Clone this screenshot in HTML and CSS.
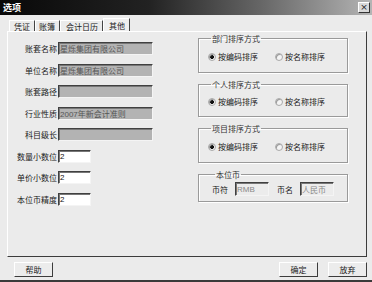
FILE: index.html
```html
<!DOCTYPE html>
<html lang="zh">
<head>
    <meta charset="UTF-8">
    <meta name="viewport" content="width=device-width, initial-scale=1.0">
    <title>选项</title>
    <link rel="stylesheet" href="styles.css">
</head>
<body>
    <div class="window">
        <div class="titlebar">
            <span class="title">选项</span>
            <span class="close">×</span>
        </div>

        <ul class="tabs">
            <li>凭证</li>
            <li>账簿</li>
            <li>会计日历</li>
            <li class="active">其他</li>
        </ul>

        <div class="panel">
            <div class="form">
                <label>账套名称</label><input class="wide disabled" value="星烁集团有限公司" disabled>
                <label>单位名称</label><input class="wide disabled" value="星烁集团有限公司" disabled>
                <label>账套路径</label><input class="wide disabled" value="" disabled>
                <label>行业性质</label><input class="wide disabled" value="2007年新会计准则" disabled>
                <label>科目级长</label><input class="wide disabled" value="" disabled>
                <label>数量小数位</label><input class="small" value="2">
                <label>单价小数位</label><input class="small" value="2">
                <label>本位币精度</label><input class="small" value="2">
            </div>

            <div class="groups">
                <fieldset class="group">
                    <legend>部门排序方式</legend>
                    <span class="radio checked"><i></i>按编码排序</span>
                    <span class="radio"><i></i>按名称排序</span>
                </fieldset>
                <fieldset class="group">
                    <legend>个人排序方式</legend>
                    <span class="radio checked"><i></i>按编码排序</span>
                    <span class="radio"><i></i>按名称排序</span>
                </fieldset>
                <fieldset class="group">
                    <legend>项目排序方式</legend>
                    <span class="radio checked"><i></i>按编码排序</span>
                    <span class="radio"><i></i>按名称排序</span>
                </fieldset>
                <fieldset class="group currency">
                    <legend>本位币</legend>
                    <span class="field">币符</span><input class="cur" value="RMB" disabled>
                    <span class="field">币名</span><input class="cur" value="人民币" disabled>
                </fieldset>
            </div>
        </div>

        <div class="footer">
            <button>帮助</button>
            <span class="spacer"></span>
            <button>确定</button>
            <button>放弃</button>
        </div>
    </div>
</body>
</html>
```

FILE: styles.css
```css
body {
    margin: 0;
    font-family: "Noto Sans CJK SC", "Liberation Sans", sans-serif;
    font-size: 8px;
    color: #222;
}

.window {
    width: 372px;
    height: 282px;
    box-sizing: border-box;
    background-color: #ebebeb;
    border-bottom: 2px solid #3a3a3a;
    display: flex;
    flex-direction: column;
}

/* Title bar */
.titlebar {
    height: 15px;
    display: flex;
    align-items: center;
    justify-content: space-between;
    padding: 0 2px 0 3px;
    background: linear-gradient(to right, #080808, #222 40%, #666 70%, #b4b4b4);
}

.title {
    color: #fff;
    font-weight: bold;
    font-size: 9px;
    line-height: 1;
}

.close {
    width: 10px;
    height: 9px;
    line-height: 8px;
    text-align: center;
    font-family: "DejaVu Sans", sans-serif;
    font-size: 9px;
    color: #222;
    background-color: #d8d8d8;
    border: 1px solid;
    border-color: #fff #333 #333 #fff;
}

/* Tabs */
.tabs {
    display: flex;
    align-items: flex-end;
    list-style-type: none;
    margin: 4px 0 0 9px;
    padding: 0;
    height: 12px;
}

.tabs li {
    height: 10px;
    line-height: 11px;
    padding: 0 4px 0 4px;
    border-left: 1px solid #fff;
    border-top: 1px solid #fff;
    border-right: 1px solid #444;
}

.tabs li:nth-child(2) {
    padding-left: 3px;
}

.tabs li:nth-child(3) {
    padding-left: 5px;
}

.tabs li.active {
    height: 12px;
    line-height: 14px;
    padding-left: 5px;
    background-color: #efefef;
}

/* Panel */
.panel {
    margin: 0 5px 0 7px;
    height: 226px;
    box-sizing: border-box;
    border: 1px solid;
    border-color: #fff #3c3c3c #3c3c3c #fff;
    display: flex;
}

.form {
    width: 190px;
    padding-top: 10px;
    display: grid;
    grid-template-columns: 50px auto;
    grid-auto-rows: 13px;
    row-gap: 8.5px;
    align-items: center;
    align-content: start;
}

.form label {
    text-align: right;
    padding-right: 1px;
    white-space: nowrap;
}

input {
    box-sizing: border-box;
    height: 13px;
    margin: 0;
    padding: 0 1px;
    font-family: "Liberation Sans", "Noto Sans CJK SC", sans-serif;
    font-size: 8px;
    color: #111;
    background-color: #fff;
    border: 1px solid;
    border-color: #404040 #f4f4f4 #f4f4f4 #404040;
    box-shadow: inset 1px 1px 0 #777;
    outline: none;
}

input.wide {
    width: 95px;
}

input.small {
    width: 33px;
}

input.disabled {
    background-color: #b3b3b3;
    color: #555;
}

/* Group boxes */
.groups {
    padding-top: 2px;
    width: 150px;
    display: flex;
    flex-direction: column;
    gap: 7px;
}

.group {
    margin: 0;
    padding: 8px 0 10px 9px;
    border: 1px solid #9a9a9a;
    box-shadow: 1px 1px 0 #fff, inset 1px 1px 0 #fff;
    display: flex;
    align-items: center;
    min-inline-size: 0;
}

.group:nth-child(2) {
    padding-top: 7px;
    padding-bottom: 9px;
}

.group legend {
    margin-left: 3px;
    padding: 0 1px;
    color: #333;
    line-height: 9px;
}

.radio {
    display: flex;
    align-items: center;
    gap: 2px;
    width: 67px;
    color: #222;
}

.radio i {
    width: 6px;
    height: 6px;
    border-radius: 50%;
    border: 1px solid #aaa;
    background: #f4f4f4;
    box-shadow: inset 1px 1px 0 #999;
}

.radio.checked i {
    background: radial-gradient(circle, #111 0 1.8px, #f4f4f4 2.2px);
}

.group.currency {
    padding: 3px 0 5px 13px;
}

.field {
    margin-right: 7px;
}

input.cur {
    width: 34px;
    height: 14px;
    margin-right: 8px;
    background-color: #ececec;
    color: #888;
}

/* Footer */
.footer {
    display: flex;
    align-items: center;
    gap: 10px;
    padding: 5px 5px 0 14px;
}

.spacer {
    flex: 1;
}

.footer button {
    width: 39px;
    height: 15px;
    padding: 0;
    font-family: "Noto Sans CJK SC", sans-serif;
    font-size: 8px;
    color: #222;
    background-color: #ececec;
    border: 1px solid;
    border-color: #fff #3c3c3c #3c3c3c #fff;
}
```
